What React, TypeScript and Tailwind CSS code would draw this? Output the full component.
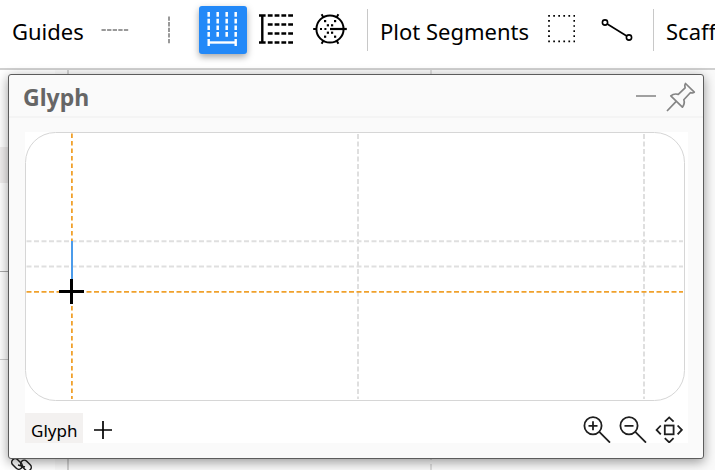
import React from "react";

function Divider() {
  return <div className="h-[42px] w-px shrink-0 bg-[#c8c8c8]" />;
}

function GuideHorizontalIcon() {
  return (
    <svg width="28" height="28" viewBox="0 0 28 28" aria-hidden="true">
      <path d="M0.5 14H27.5" stroke="#999" strokeWidth="2" strokeDasharray="4.3 1.3" />
    </svg>
  );
}

function GuideVerticalIcon() {
  return (
    <svg width="28" height="28" viewBox="0 0 28 28" aria-hidden="true">
      <path d="M14 0.5V27.5" stroke="#999" strokeWidth="2" strokeDasharray="4.3 1.3" />
    </svg>
  );
}

function LineXIcon() {
  return (
    <svg width="36" height="36" viewBox="0 0 36 36" fill="none" stroke="#fff" aria-hidden="true">
      <path d="M3.7 0V25M12.7 0V25M21.7 0V25M30.7 0V25" strokeWidth="2.5" strokeDasharray="4.7 2" />
      <path d="M3.7 30.5H30.7" strokeWidth="2.4" />
      <path d="M3.7 27V34M30.7 27V34" strokeWidth="2.4" />
    </svg>
  );
}

function LineYIcon() {
  return (
    <svg width="36" height="36" viewBox="0 0 36 36" fill="none" stroke="#000" aria-hidden="true">
      <path d="M3.3 3.5V30.5M0 3.5H6.6M0 30.5H6.6" strokeWidth="2.4" />
      <path d="M8.8 3.5H34M8.8 30.5H34M8.8 12.5H34M8.8 21.5H34" strokeWidth="2.4" strokeDasharray="4.8 2" />
    </svg>
  );
}

function PolarIcon() {
  return (
    <svg width="36" height="36" viewBox="0 0 36 36" fill="none" stroke="#000" strokeWidth="2" aria-hidden="true">
      <circle cx="18" cy="17" r="13.6" />
      <path d="M18 17H34.8" strokeWidth="2.2" />
      <path d="M1.2 17H5M9.6 2.3L11.6 5.8M26.4 2.3L24.4 5.8M9.6 31.7L11.6 28.2M26.4 31.7L24.4 28.2" />
      <g fill="#000" stroke="none">
        <rect x="8" y="16" width="2" height="2" /><rect x="12.4" y="16" width="2" height="2" />
        <rect x="12" y="8" width="2.2" height="2.2" /><rect x="22" y="8" width="2.2" height="2.2" />
        <rect x="14.8" y="12.2" width="2.2" height="2.2" /><rect x="19" y="12.2" width="2.2" height="2.2" />
        <rect x="14.8" y="19.6" width="2.2" height="2.2" /><rect x="19" y="19.6" width="2.2" height="2.2" />
        <rect x="12" y="23.6" width="2.2" height="2.2" /><rect x="22" y="23.6" width="2.2" height="2.2" />
      </g>
    </svg>
  );
}

function RegionIcon() {
  return (
    <svg width="28" height="28" viewBox="0 0 28 28" fill="none" stroke="#000" strokeWidth="1.8" aria-hidden="true">
      <path d="M1.2 0.9H28M1.2 26.3H28" strokeDasharray="1.7 3.35" />
      <path d="M2 5.1V24M27.3 5.1V24" strokeDasharray="1.7 3.35" />
    </svg>
  );
}

function LinkLineIcon() {
  return (
    <svg width="32" height="24" viewBox="0 0 32 24" fill="none" stroke="#000" strokeWidth="1.6" aria-hidden="true">
      <circle cx="4" cy="4.5" r="2.6" />
      <circle cx="28" cy="19.5" r="2.6" />
      <path d="M6.3 6L25.7 18" />
    </svg>
  );
}

function PushpinIcon() {
  return (
    <svg width="30" height="30" viewBox="0 0 30 30" fill="none" stroke="#858585" strokeWidth="1.7" strokeLinejoin="round" aria-hidden="true">
      <path d="M1 29L10.2 19.4M19.5 1.5L28.3 10.2L26.5 11L24.3 10.7L17.8 17.8C18.8 20.5 18 23 16.4 25.2L4.8 13.8C7 12 9.5 11.6 12.3 12.4L19.1 5.8L18.8 3.4Z" />
    </svg>
  );
}

function ZoomIcon({ plus = false }: { plus?: boolean }) {
  return (
    <svg width="28" height="27" viewBox="0 0 28 27" fill="none" stroke="#1f1f1f" strokeWidth="1.8" aria-hidden="true">
      <circle cx="10" cy="9.8" r="8.6" />
      <path d="M16.3 15.9L27 26.6M5.5 9.8H14.5" />
      {plus && <path d="M10 5.3V14.3" />}
    </svg>
  );
}

function FitIcon() {
  return (
    <svg width="28" height="27" viewBox="0 0 28 27" fill="none" stroke="#1f1f1f" strokeWidth="1.8" aria-hidden="true">
      <rect x="9.8" y="9.5" width="8.8" height="8.8" />
      <path d="M9.8 5.6L14.2 1.4L18.6 5.6M9.8 22.2L14.2 26.4L18.6 22.2M5.8 9.5L1.6 13.9L5.8 18.3M22.6 9.5L26.8 13.9L22.6 18.3" />
    </svg>
  );
}

function ChainIcon() {
  return (
    <svg className="ml-[11px] shrink-0" width="22" height="22" viewBox="0 0 22 22" fill="none" stroke="#1f1f1f" strokeWidth="1.5" aria-hidden="true">
      <rect x="-3.5" y="-6" width="7" height="12" rx="3.5" transform="translate(6 6) rotate(-45)" />
      <rect x="-3.5" y="-6" width="7" height="12" rx="3.5" transform="translate(15 7.5) rotate(-45)" />
      <path d="M7 7L14 9" />
    </svg>
  );
}

function ToolButton({ label, active, className, children }: { label: string; active?: boolean; className: string; children: React.ReactNode }) {
  return (
    <button
      type="button"
      aria-label={label}
      aria-pressed={active}
      className={`flex h-12 shrink-0 items-center justify-center rounded-[3px] ${active ? "bg-[#2389f8] shadow-[0_3px_7px_rgba(0,0,0,0.35)]" : ""} ${className}`}
    >
      {children}
    </button>
  );
}

function Toolbar() {
  return (
    <header className="flex h-[70px] shrink-0 items-start overflow-hidden border-b-2 border-[#d0d0d0] bg-white pt-[6px] pl-3 text-[22px] whitespace-nowrap">
      <div className="flex h-12 shrink-0 items-center">
        <span className="w-[76px] pt-[2px]">Guides</span>
        <ToolButton label="Horizontal guide" className="w-[54px]"><GuideHorizontalIcon /></ToolButton>
        <ToolButton label="Vertical guide" className="w-[54px]"><GuideVerticalIcon /></ToolButton>
        <ToolButton label="Horizontal line scaffold" active className="ml-[3px] w-12"><LineXIcon /></ToolButton>
        <ToolButton label="Vertical line scaffold" className="ml-[6px] w-12"><LineYIcon /></ToolButton>
        <ToolButton label="Polar scaffold" className="ml-[5px] w-12"><PolarIcon /></ToolButton>
        <div className="w-[13px]" />
        <Divider />
        <span className="w-[166px] pt-[2px] pl-3">Plot Segments</span>
        <ToolButton label="2D region" className="w-[54px] pb-[2px]"><RegionIcon /></ToolButton>
        <ToolButton label="Line" className="w-[58px]"><LinkLineIcon /></ToolButton>
        <div className="w-[7px]" />
        <Divider />
        <span className="pt-[2px] pl-3">Scaffolds</span>
      </div>
    </header>
  );
}

function Workspace() {
  return (
    <div className="flex min-h-0 flex-1 overflow-hidden bg-[#fafafa]">
      <aside className="flex w-[69px] shrink-0 flex-col border-r-2 border-[#d0d0d0]">
        <div className="mr-3 h-[77px] bg-white" />
        <div className="h-9 bg-[#f0eeee]" />
        <div className="h-[89px] border-b border-[#aaa] bg-white" />
        <div className="h-[88px] border-b border-[#ccc] bg-white" />
        <div className="mr-3 flex flex-1 items-end overflow-hidden bg-white">
          <div className="flex h-3 items-start"><ChainIcon /></div>
        </div>
      </aside>
      <main className="flex-1 pl-[361px]">
        <div className="h-full w-0 border-l-2 border-dashed border-[#ddd]" />
      </main>
    </div>
  );
}

function GlyphCanvas() {
  return (
    <svg className="block w-full" viewBox="0 0 663 269" fill="none" role="img" aria-label="Glyph canvas">
      <rect x="0.5" y="0.5" width="659" height="268" rx="30" stroke="#d6d6d6" />
      <g stroke="#dfdfdf" strokeWidth="2">
        <path d="M333 2V267M619 2V267" strokeDasharray="5 2.5" />
        <path d="M1.5 109.2H658M1.5 134.4H658" strokeDasharray="5 2.5" />
      </g>
      <g stroke="#f0a12c" strokeWidth="1.8">
        <path d="M46.9 1.5V267" strokeDasharray="4.6 2.9" />
        <path d="M1.5 159.8H658" strokeDasharray="5 2.5" />
      </g>
      <path d="M47 109V150" stroke="#4b9bea" strokeWidth="2" />
      <path d="M34 159.5H59M46.5 147V172" stroke="#000" strokeWidth="3" />
    </svg>
  );
}

function GlyphPanel() {
  return (
    <section className="absolute top-[74px] right-[11px] left-2 rounded-[3px] border border-[#5c5c5c] bg-[#fafafa] shadow-[0_3px_12px_rgba(0,0,0,0.4)]">
      <div className="flex h-[43px] items-center border-b-2 border-[#f4f4f4] pr-[7px] pl-[14px]">
        <h2 className="flex-1 pt-[2px] text-[23px] leading-8 font-bold text-[#666]">Glyph</h2>
        <button type="button" aria-label="Minimize" className="flex h-8 w-[30px] items-center">
          <span className="h-[2px] w-5 bg-[#a0a0a0]" />
        </button>
        <button type="button" aria-label="Pin panel" className="flex h-8 items-center pt-[2px]"><PushpinIcon /></button>
      </div>
      <div className="mt-[14px] mr-[15px] mb-[15px] ml-4 bg-white">
        <GlyphCanvas />
        <div className="flex items-end pt-3">
          <button type="button" className="h-[30px] bg-[#f3f1f0] px-[6px] pt-[6px] text-[17px] leading-6">Glyph</button>
          <button type="button" aria-label="Add glyph" className="flex h-[30px] w-[39px] items-center justify-center pt-1">
            <svg width="18" height="18" viewBox="0 0 18 18" stroke="#000" strokeWidth="1.7" aria-hidden="true"><path d="M0 9H18M9 0V18" /></svg>
          </button>
          <div className="ml-auto flex gap-2 pr-[5px]">
            <button type="button" aria-label="Zoom in"><ZoomIcon plus /></button>
            <button type="button" aria-label="Zoom out"><ZoomIcon /></button>
            <button type="button" aria-label="Fit view"><FitIcon /></button>
          </div>
        </div>
      </div>
    </section>
  );
}

export default function App() {
  return (
    <div className="relative flex h-screen flex-col overflow-hidden bg-white font-['Noto_Sans','Open_Sans',sans-serif] text-black">
      <Toolbar />
      <Workspace />
      <GlyphPanel />
    </div>
  );
}
